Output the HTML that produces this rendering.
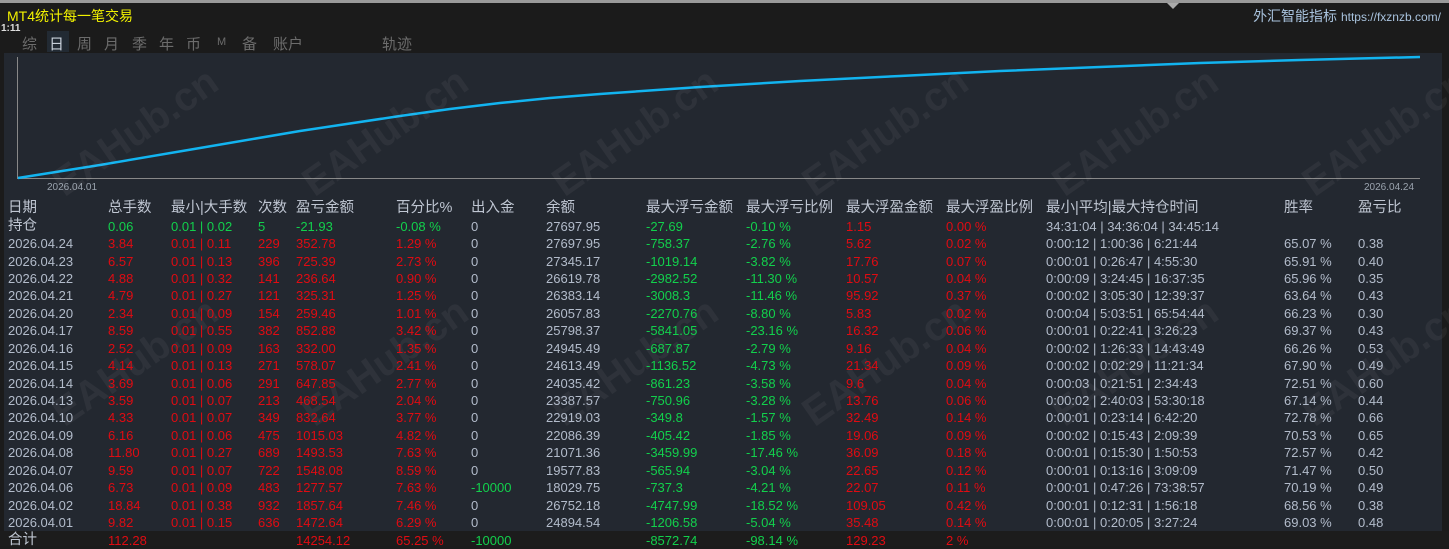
<!DOCTYPE html>
<html><head><meta charset="utf-8"><style>
body{margin:0;width:1449px;height:546px;background:#1b1b1b;overflow:hidden;position:relative;font-family:"Liberation Sans","Noto Sans CJK SC",sans-serif;}
.top{position:absolute;left:0;top:0;width:1449px;height:3px;background:#9a9a9a}
.title{position:absolute;left:7px;top:6px;color:#f2f200;font-size:14px}
.tm{position:absolute;left:1px;top:23px;color:#ddd;font-size:10px;font-weight:bold}
.tabs{position:absolute;top:33px;left:22px;color:#6c6c6c;font-size:15px}
.tabs span{position:absolute;white-space:nowrap}
.brand{position:absolute;right:8px;top:6px;color:#a9c3de;font-size:14px}
.brand small{font-size:12px}
.main{position:absolute;left:4px;top:53px;width:1438px;height:478px;background:#232830}
.foot{position:absolute;left:0;top:531px;width:1449px;height:15px;background:#1c1c1c}
table{position:absolute;left:8px;top:200px;border-collapse:collapse;table-layout:fixed;font-size:13px;color:#b3bccb}
td{padding:0;height:17.45px;line-height:17px;white-space:nowrap;overflow:visible}
.r{color:#e00b12}.g{color:#12d04c}
.hd td{font-size:14.5px;color:#bfc6d2}
.wm{position:absolute;color:rgba(255,255,255,0.05);font-size:40px;font-weight:bold;transform:rotate(-35deg);white-space:nowrap}
</style></head><body>
<div class="top"></div>
<div style="position:absolute;left:1167px;top:3px;width:0;height:0;border-left:6px solid transparent;border-right:6px solid transparent;border-top:6px solid #aaa"></div>
<div class="title">MT4统计每一笔交易</div>
<div class="tm">1:11</div>
<div style="position:absolute;left:47px;top:31px;width:22px;height:21px;background:#222a33"></div>
<div class="tabs"><span style="left:0">综</span><span style="left:27px;color:#c8d0da">日</span><span style="left:55px">周</span><span style="left:82px">月</span><span style="left:110px">季</span><span style="left:137px">年</span><span style="left:164px">币</span><span style="left:195px;font-size:11px;top:3px">M</span><span style="left:220px">备</span><span style="left:251px">账户</span><span style="left:360px">轨迹</span></div>
<div class="brand">外汇智能指标 <small>https://fxznzb.com/</small></div>
<div class="main"></div>
<div class="foot"></div>
<svg style="position:absolute;left:0;top:0" width="1449" height="200">
<line x1="17.5" y1="57" x2="17.5" y2="178" stroke="#888" stroke-width="1"/>
<line x1="17" y1="178.5" x2="1420" y2="178.5" stroke="#888" stroke-width="1"/>
<polyline fill="none" stroke="#12b4f0" stroke-width="2.5" points="18,178 100,165 200,148 300,131 400,116 450,109 500,103 550,98 600,94 700,87 800,81 900,76 1000,71 1100,67 1200,63 1300,60 1420,57"/>
<text x="47" y="190" fill="#9aa3ae" font-size="10" font-family="Liberation Sans">2026.04.01</text>
<text x="1364" y="190" fill="#9aa3ae" font-size="10" font-family="Liberation Sans">2026.04.24</text>
</svg>
<div class="wm" style="left:40px;top:110px">EAHub.cn</div>
<div class="wm" style="left:290px;top:110px">EAHub.cn</div>
<div class="wm" style="left:540px;top:110px">EAHub.cn</div>
<div class="wm" style="left:790px;top:110px">EAHub.cn</div>
<div class="wm" style="left:1040px;top:110px">EAHub.cn</div>
<div class="wm" style="left:1290px;top:110px">EAHub.cn</div>
<div class="wm" style="left:40px;top:340px">EAHub.cn</div>
<div class="wm" style="left:290px;top:340px">EAHub.cn</div>
<div class="wm" style="left:540px;top:340px">EAHub.cn</div>
<div class="wm" style="left:790px;top:340px">EAHub.cn</div>
<div class="wm" style="left:1040px;top:340px">EAHub.cn</div>
<div class="wm" style="left:1290px;top:340px">EAHub.cn</div>
<table>
<colgroup><col style="width:100px"><col style="width:63px"><col style="width:87px"><col style="width:38px"><col style="width:100px"><col style="width:75px"><col style="width:75px"><col style="width:100px"><col style="width:100px"><col style="width:100px"><col style="width:100px"><col style="width:100px"><col style="width:238px"><col style="width:74px"><col style="width:80px"></colgroup>
<tr class="hd"><td>日期</td><td>总手数</td><td>最小|大手数</td><td>次数</td><td>盈亏金额</td><td>百分比%</td><td>出入金</td><td>余额</td><td>最大浮亏金额</td><td>最大浮亏比例</td><td>最大浮盈金额</td><td>最大浮盈比例</td><td>最小|平均|最大持仓时间</td><td>胜率</td><td>盈亏比</td></tr>
<tr><td style="font-size:14.5px;color:#bfc6d2">持仓</td><td class="g">0.06</td><td class="g">0.01 | 0.02</td><td class="g">5</td><td class="g">-21.93</td><td class="g">-0.08 %</td><td>0</td><td>27697.95</td><td class="g">-27.69</td><td class="g">-0.10 %</td><td class="r">1.15</td><td class="r">0.00 %</td><td>34:31:04 | 34:36:04 | 34:45:14</td><td></td><td></td></tr>
<tr><td>2026.04.24</td><td class="r">3.84</td><td class="r">0.01 | 0.11</td><td class="r">229</td><td class="r">352.78</td><td class="r">1.29 %</td><td>0</td><td>27697.95</td><td class="g">-758.37</td><td class="g">-2.76 %</td><td class="r">5.62</td><td class="r">0.02 %</td><td>0:00:12 | 1:00:36 | 6:21:44</td><td>65.07 %</td><td>0.38</td></tr>
<tr><td>2026.04.23</td><td class="r">6.57</td><td class="r">0.01 | 0.13</td><td class="r">396</td><td class="r">725.39</td><td class="r">2.73 %</td><td>0</td><td>27345.17</td><td class="g">-1019.14</td><td class="g">-3.82 %</td><td class="r">17.76</td><td class="r">0.07 %</td><td>0:00:01 | 0:26:47 | 4:55:30</td><td>65.91 %</td><td>0.40</td></tr>
<tr><td>2026.04.22</td><td class="r">4.88</td><td class="r">0.01 | 0.32</td><td class="r">141</td><td class="r">236.64</td><td class="r">0.90 %</td><td>0</td><td>26619.78</td><td class="g">-2982.52</td><td class="g">-11.30 %</td><td class="r">10.57</td><td class="r">0.04 %</td><td>0:00:09 | 3:24:45 | 16:37:35</td><td>65.96 %</td><td>0.35</td></tr>
<tr><td>2026.04.21</td><td class="r">4.79</td><td class="r">0.01 | 0.27</td><td class="r">121</td><td class="r">325.31</td><td class="r">1.25 %</td><td>0</td><td>26383.14</td><td class="g">-3008.3</td><td class="g">-11.46 %</td><td class="r">95.92</td><td class="r">0.37 %</td><td>0:00:02 | 3:05:30 | 12:39:37</td><td>63.64 %</td><td>0.43</td></tr>
<tr><td>2026.04.20</td><td class="r">2.34</td><td class="r">0.01 | 0.09</td><td class="r">154</td><td class="r">259.46</td><td class="r">1.01 %</td><td>0</td><td>26057.83</td><td class="g">-2270.76</td><td class="g">-8.80 %</td><td class="r">5.83</td><td class="r">0.02 %</td><td>0:00:04 | 5:03:51 | 65:54:44</td><td>66.23 %</td><td>0.30</td></tr>
<tr><td>2026.04.17</td><td class="r">8.59</td><td class="r">0.01 | 0.55</td><td class="r">382</td><td class="r">852.88</td><td class="r">3.42 %</td><td>0</td><td>25798.37</td><td class="g">-5841.05</td><td class="g">-23.16 %</td><td class="r">16.32</td><td class="r">0.06 %</td><td>0:00:01 | 0:22:41 | 3:26:23</td><td>69.37 %</td><td>0.43</td></tr>
<tr><td>2026.04.16</td><td class="r">2.52</td><td class="r">0.01 | 0.09</td><td class="r">163</td><td class="r">332.00</td><td class="r">1.35 %</td><td>0</td><td>24945.49</td><td class="g">-687.87</td><td class="g">-2.79 %</td><td class="r">9.16</td><td class="r">0.04 %</td><td>0:00:02 | 1:26:33 | 14:43:49</td><td>66.26 %</td><td>0.53</td></tr>
<tr><td>2026.04.15</td><td class="r">4.14</td><td class="r">0.01 | 0.13</td><td class="r">271</td><td class="r">578.07</td><td class="r">2.41 %</td><td>0</td><td>24613.49</td><td class="g">-1136.52</td><td class="g">-4.73 %</td><td class="r">21.34</td><td class="r">0.09 %</td><td>0:00:02 | 0:02:29 | 11:21:34</td><td>67.90 %</td><td>0.49</td></tr>
<tr><td>2026.04.14</td><td class="r">3.69</td><td class="r">0.01 | 0.06</td><td class="r">291</td><td class="r">647.85</td><td class="r">2.77 %</td><td>0</td><td>24035.42</td><td class="g">-861.23</td><td class="g">-3.58 %</td><td class="r">9.6</td><td class="r">0.04 %</td><td>0:00:03 | 0:21:51 | 2:34:43</td><td>72.51 %</td><td>0.60</td></tr>
<tr><td>2026.04.13</td><td class="r">3.59</td><td class="r">0.01 | 0.07</td><td class="r">213</td><td class="r">468.54</td><td class="r">2.04 %</td><td>0</td><td>23387.57</td><td class="g">-750.96</td><td class="g">-3.28 %</td><td class="r">13.76</td><td class="r">0.06 %</td><td>0:00:02 | 2:40:03 | 53:30:18</td><td>67.14 %</td><td>0.44</td></tr>
<tr><td>2026.04.10</td><td class="r">4.33</td><td class="r">0.01 | 0.07</td><td class="r">349</td><td class="r">832.64</td><td class="r">3.77 %</td><td>0</td><td>22919.03</td><td class="g">-349.8</td><td class="g">-1.57 %</td><td class="r">32.49</td><td class="r">0.14 %</td><td>0:00:01 | 0:23:14 | 6:42:20</td><td>72.78 %</td><td>0.66</td></tr>
<tr><td>2026.04.09</td><td class="r">6.16</td><td class="r">0.01 | 0.06</td><td class="r">475</td><td class="r">1015.03</td><td class="r">4.82 %</td><td>0</td><td>22086.39</td><td class="g">-405.42</td><td class="g">-1.85 %</td><td class="r">19.06</td><td class="r">0.09 %</td><td>0:00:02 | 0:15:43 | 2:09:39</td><td>70.53 %</td><td>0.65</td></tr>
<tr><td>2026.04.08</td><td class="r">11.80</td><td class="r">0.01 | 0.27</td><td class="r">689</td><td class="r">1493.53</td><td class="r">7.63 %</td><td>0</td><td>21071.36</td><td class="g">-3459.99</td><td class="g">-17.46 %</td><td class="r">36.09</td><td class="r">0.18 %</td><td>0:00:01 | 0:15:30 | 1:50:53</td><td>72.57 %</td><td>0.42</td></tr>
<tr><td>2026.04.07</td><td class="r">9.59</td><td class="r">0.01 | 0.07</td><td class="r">722</td><td class="r">1548.08</td><td class="r">8.59 %</td><td>0</td><td>19577.83</td><td class="g">-565.94</td><td class="g">-3.04 %</td><td class="r">22.65</td><td class="r">0.12 %</td><td>0:00:01 | 0:13:16 | 3:09:09</td><td>71.47 %</td><td>0.50</td></tr>
<tr><td>2026.04.06</td><td class="r">6.73</td><td class="r">0.01 | 0.09</td><td class="r">483</td><td class="r">1277.57</td><td class="r">7.63 %</td><td class="g">-10000</td><td>18029.75</td><td class="g">-737.3</td><td class="g">-4.21 %</td><td class="r">22.07</td><td class="r">0.11 %</td><td>0:00:01 | 0:47:26 | 73:38:57</td><td>70.19 %</td><td>0.49</td></tr>
<tr><td>2026.04.02</td><td class="r">18.84</td><td class="r">0.01 | 0.38</td><td class="r">932</td><td class="r">1857.64</td><td class="r">7.46 %</td><td>0</td><td>26752.18</td><td class="g">-4747.99</td><td class="g">-18.52 %</td><td class="r">109.05</td><td class="r">0.42 %</td><td>0:00:01 | 0:12:31 | 1:56:18</td><td>68.56 %</td><td>0.38</td></tr>
<tr><td>2026.04.01</td><td class="r">9.82</td><td class="r">0.01 | 0.15</td><td class="r">636</td><td class="r">1472.64</td><td class="r">6.29 %</td><td>0</td><td>24894.54</td><td class="g">-1206.58</td><td class="g">-5.04 %</td><td class="r">35.48</td><td class="r">0.14 %</td><td>0:00:01 | 0:20:05 | 3:27:24</td><td>69.03 %</td><td>0.48</td></tr>
<tr><td style="font-size:14.5px;color:#bfc6d2">合计</td><td class="r">112.28</td><td></td><td></td><td class="r">14254.12</td><td class="r">65.25 %</td><td class="g">-10000</td><td></td><td class="g">-8572.74</td><td class="g">-98.14 %</td><td class="r">129.23</td><td class="r">2 %</td><td></td><td></td><td></td></tr>
</table>
</body></html>
